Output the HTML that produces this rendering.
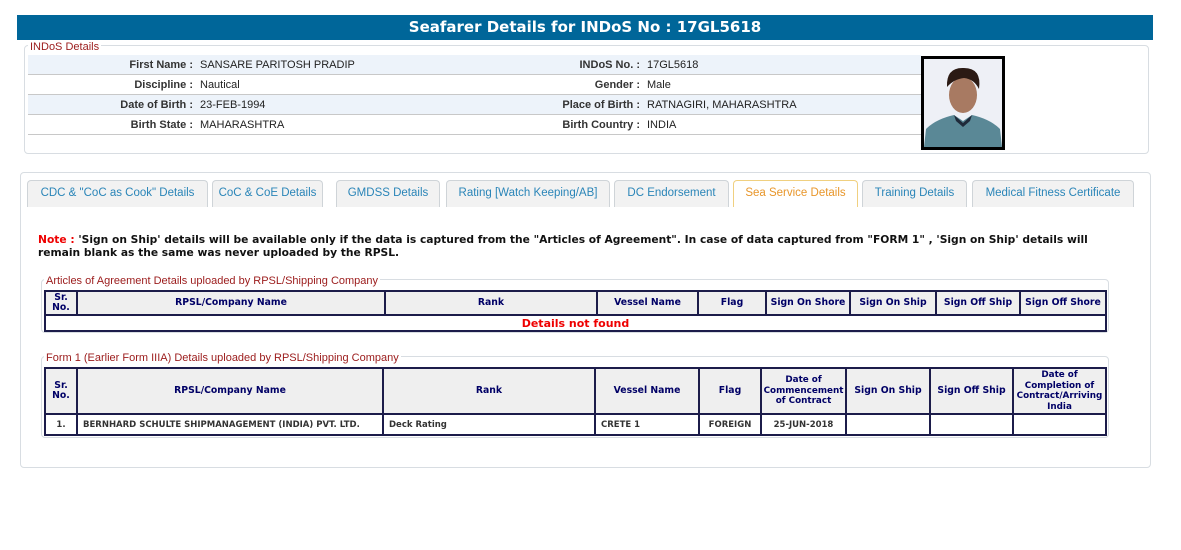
<!DOCTYPE html>
<html><head><style>
*{margin:0;padding:0;box-sizing:border-box}
body{width:1181px;height:550px;background:#fff;position:relative;font-family:"Liberation Sans",Arial,sans-serif;overflow:hidden}
.a{position:absolute}
.hdr{left:17px;top:15px;width:1136px;height:25px;background:#006699;color:#fff;font:bold 15px "DejaVu Sans",sans-serif;text-align:center;line-height:25px}
.box{border:1px solid #d8dde2;border-radius:4px}
.leg{background:#fff;color:#9b1b1b;font-size:11px;padding:0 2px;line-height:12px}
.row{left:28px;width:893px;height:20px;border-bottom:1px solid #c8c8c8;font-size:11px;line-height:20px;color:#222}
.row.alt{background:#edf3fa}
.lb{position:absolute;text-align:right;font-weight:bold;color:#333}
.vl{position:absolute}
.tab{top:180px;height:27px;border:1px solid #cfd4d8;border-bottom:none;border-radius:4px 4px 0 0;background:#f2f2f2;color:#2a85b8;font-size:11.5px;text-align:center;line-height:25px;white-space:nowrap}
.note{left:38px;top:233px;font:bold 10.7px "DejaVu Sans",sans-serif;color:#111;line-height:13px;width:1060px}
table{position:absolute;border-collapse:collapse;font:bold 9.3px "DejaVu Sans",sans-serif;color:#000066;table-layout:fixed}
td,th{border:2px solid #1c1c4a;text-align:center;padding:0;overflow:hidden}
th{background:#efefef;line-height:10.5px}
td.l{text-align:left;padding-left:5px;color:#333;font-size:8.5px}
td.c{color:#333;font-size:8.5px}
</style></head><body>
<div class="a hdr">Seafarer Details for INDoS No : 17GL5618</div>

<div class="a box" style="left:24px;top:45px;width:1125px;height:109px"></div>
<div class="a leg" style="left:28px;top:41px">INDoS Details</div>
<div class="a row alt" style="top:55px"><span class="lb" style="right:728px">First Name :</span><span class="vl" style="left:172px">SANSARE PARITOSH PRADIP</span><span class="lb" style="right:281px">INDoS No. :</span><span class="vl" style="left:619px">17GL5618</span></div>
<div class="a row" style="top:75px"><span class="lb" style="right:728px">Discipline :</span><span class="vl" style="left:172px">Nautical</span><span class="lb" style="right:281px">Gender :</span><span class="vl" style="left:619px">Male</span></div>
<div class="a row alt" style="top:95px"><span class="lb" style="right:728px">Date of Birth :</span><span class="vl" style="left:172px">23-FEB-1994</span><span class="lb" style="right:281px">Place of Birth :</span><span class="vl" style="left:619px">RATNAGIRI, MAHARASHTRA</span></div>
<div class="a row" style="top:115px"><span class="lb" style="right:728px">Birth State :</span><span class="vl" style="left:172px">MAHARASHTRA</span><span class="lb" style="right:281px">Birth Country :</span><span class="vl" style="left:619px">INDIA</span></div>
<div class="a" style="left:921px;top:56px;width:84px;height:94px;border:3px solid #000;background:#eef0f6;overflow:hidden">
<svg width="78" height="88" viewBox="0 0 78 88"><ellipse cx="39" cy="36" rx="14" ry="18" fill="#a87a62"/><path d="M23 28 Q22 8 40 9 Q58 9 55 30 Q50 20 40 19 Q30 20 23 28Z" fill="#2b1a14"/><path d="M0 88 L2 70 Q12 60 30 56 L39 62 L48 56 Q66 60 76 70 L78 88Z" fill="#5a8896"/><path d="M30 56 L39 64 L48 56 L46 62 L39 68 L32 62Z" fill="#1f2a3a"/></svg></div>

<div class="a box" style="left:20px;top:172px;width:1131px;height:296px"></div>
<div class="a tab" style="left:27px;width:181px">CDC &amp; "CoC as Cook" Details</div>
<div class="a tab" style="left:212px;width:111px">CoC &amp; CoE Details</div>
<div class="a tab" style="left:336px;width:104px">GMDSS Details</div>
<div class="a tab" style="left:446px;width:164px">Rating [Watch Keeping/AB]</div>
<div class="a tab" style="left:614px;width:115px">DC Endorsement</div>
<div class="a tab" style="left:733px;width:125px;background:#fff;border-color:#f0d080;color:#e8962a">Sea Service Details</div>
<div class="a tab" style="left:862px;width:105px">Training Details</div>
<div class="a tab" style="left:972px;width:162px">Medical Fitness Certificate</div>

<div class="a note"><span style="color:#e00">Note :</span> 'Sign on Ship' details will be available only if the data is captured from the "Articles of Agreement". In case of data captured from "FORM 1" , 'Sign on Ship' details will remain blank as the same was never uploaded by the RPSL.</div>

<div class="a box" style="left:41px;top:279px;width:1068px;height:54px"></div>
<div class="a leg" style="left:44px;top:275px;font-size:11px">Articles of Agreement Details uploaded by RPSL/Shipping Company</div>
<table style="left:44px;top:290px;width:1061px">
<colgroup><col style="width:32px"><col style="width:308px"><col style="width:212px"><col style="width:101px"><col style="width:68px"><col style="width:84px"><col style="width:86px"><col style="width:84px"><col style="width:86px"></colgroup>
<tr style="height:24px"><th>Sr.<br>No.</th><th>RPSL/Company Name</th><th>Rank</th><th>Vessel Name</th><th>Flag</th><th>Sign On Shore</th><th>Sign On Ship</th><th>Sign Off Ship</th><th>Sign Off Shore</th></tr>
<tr style="height:16px"><td colspan="9" style="color:#e00;font-size:11px;line-height:13px">Details not found</td></tr>
</table>

<div class="a box" style="left:41px;top:356px;width:1068px;height:82px"></div>
<div class="a leg" style="left:44px;top:352px">Form 1 (Earlier Form IIIA) Details uploaded by RPSL/Shipping Company</div>
<table style="left:44px;top:367px;width:1061px">
<colgroup><col style="width:32px"><col style="width:306px"><col style="width:212px"><col style="width:104px"><col style="width:62px"><col style="width:85px"><col style="width:84px"><col style="width:83px"><col style="width:93px"></colgroup>
<tr style="height:46px"><th>Sr.<br>No.</th><th>RPSL/Company Name</th><th>Rank</th><th>Vessel Name</th><th>Flag</th><th style="font-size:8.8px">Date of Commencement of Contract</th><th>Sign On Ship</th><th>Sign Off Ship</th><th style="font-size:8.8px">Date of Completion of Contract/Arriving India</th></tr>
<tr style="height:21px"><td class="c">1.</td><td class="l">BERNHARD SCHULTE SHIPMANAGEMENT (INDIA) PVT. LTD.</td><td class="l">Deck Rating</td><td class="l">CRETE 1</td><td class="c">FOREIGN</td><td class="c">25-JUN-2018</td><td></td><td></td><td></td></tr>
</table>
</body></html>
